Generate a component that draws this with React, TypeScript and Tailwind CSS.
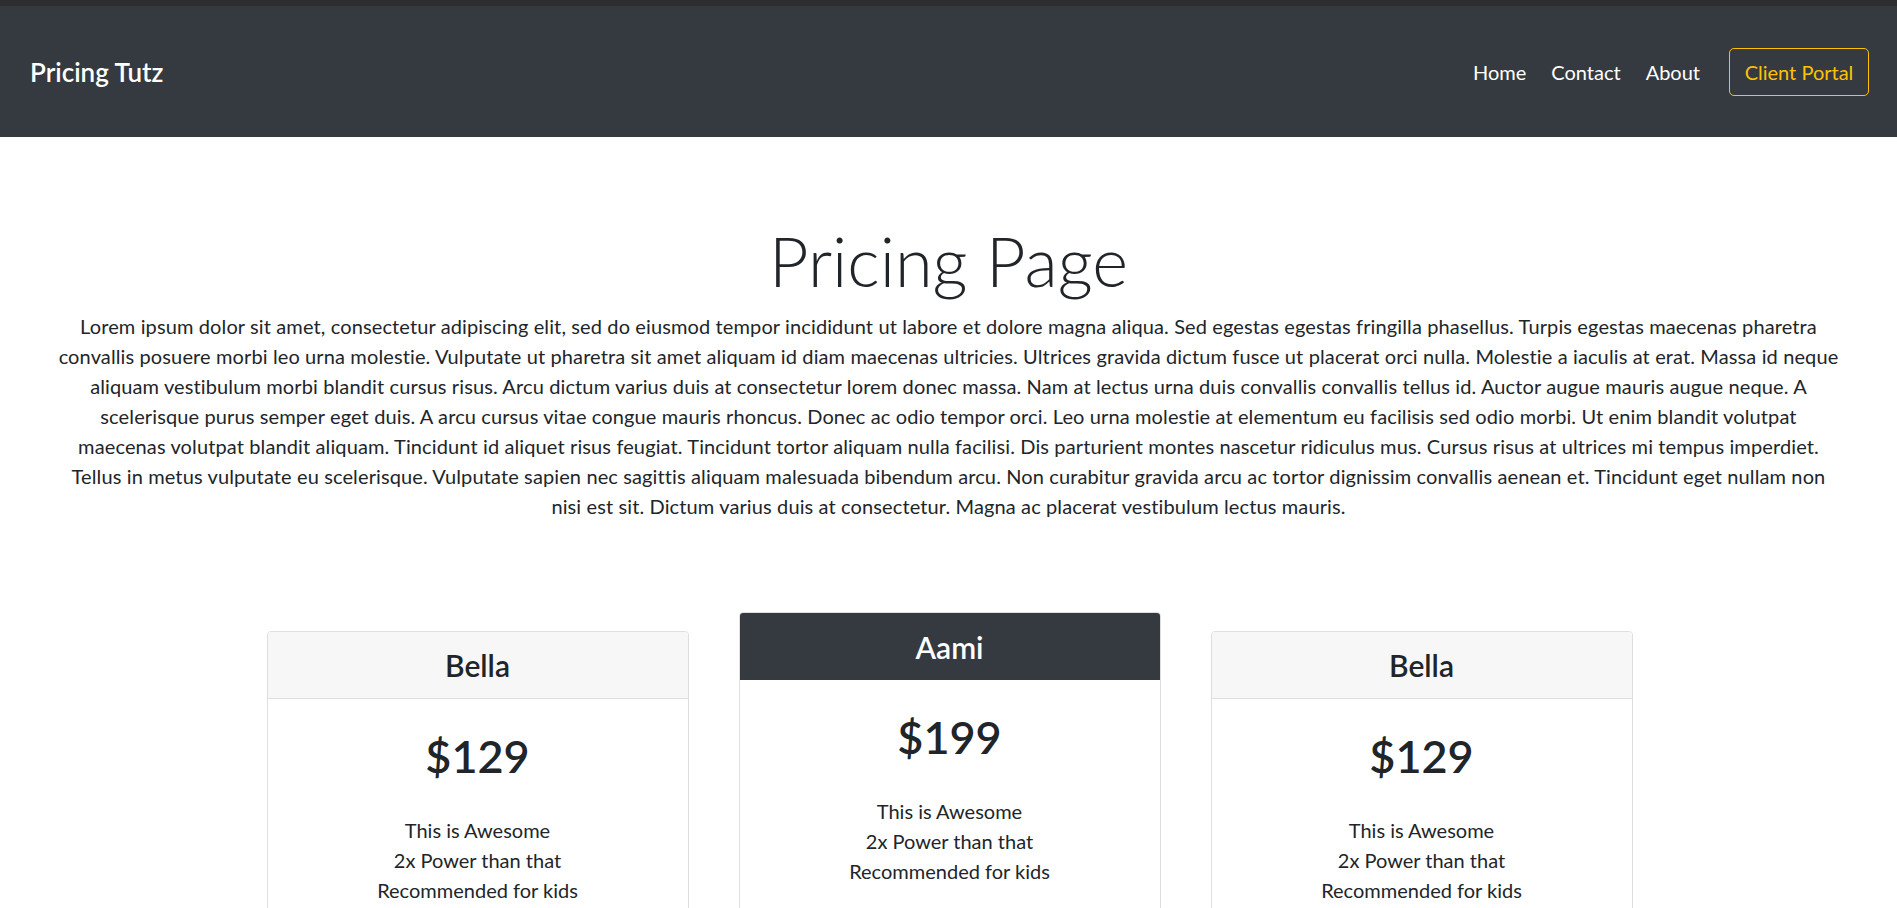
import React from "react";

const paragraphLines = [
  "Lorem ipsum dolor sit amet, consectetur adipiscing elit, sed do eiusmod tempor incididunt ut labore et dolore magna aliqua. Sed egestas egestas fringilla phasellus. Turpis egestas maecenas pharetra",
  "convallis posuere morbi leo urna molestie. Vulputate ut pharetra sit amet aliquam id diam maecenas ultricies. Ultrices gravida dictum fusce ut placerat orci nulla. Molestie a iaculis at erat. Massa id neque",
  "aliquam vestibulum morbi blandit cursus risus. Arcu dictum varius duis at consectetur lorem donec massa. Nam at lectus urna duis convallis convallis tellus id. Auctor augue mauris augue neque. A",
  "scelerisque purus semper eget duis. A arcu cursus vitae congue mauris rhoncus. Donec ac odio tempor orci. Leo urna molestie at elementum eu facilisis sed odio morbi. Ut enim blandit volutpat",
  "maecenas volutpat blandit aliquam. Tincidunt id aliquet risus feugiat. Tincidunt tortor aliquam nulla facilisi. Dis parturient montes nascetur ridiculus mus. Cursus risus at ultrices mi tempus imperdiet.",
  "Tellus in metus vulputate eu scelerisque. Vulputate sapien nec sagittis aliquam malesuada bibendum arcu. Non curabitur gravida arcu ac tortor dignissim convallis aenean et. Tincidunt eget nullam non",
  "nisi est sit. Dictum varius duis at consectetur. Magna ac placerat vestibulum lectus mauris.",
];

const features = ["This is Awesome", "2x Power than that", "Recommended for kids"];

type Plan = { name: string; price: string; featured?: boolean };

const plans: Plan[] = [
  { name: "Bella", price: "$129" },
  { name: "Aami", price: "$199", featured: true },
  { name: "Bella", price: "$129" },
];

function PricingCard({ plan }: { plan: Plan }) {
  return (
    <div
      className={
        "w-[422px] rounded-[4px] border border-[#dfdfdf] bg-white overflow-hidden " +
        (plan.featured ? "mt-0" : "mt-[19px]")
      }
    >
      <div
        className={
          plan.featured
            ? "flex h-[67px] items-center justify-center bg-[#343a40] text-white"
            : "flex h-[67px] items-center justify-center border-b border-[#dfdfdf] bg-[#f7f7f7] text-[#212529]"
        }
      >
        <h3 className="text-[30px] font-semibold leading-[36px]">{plan.name}</h3>
      </div>
      <div className="flex flex-col items-center px-5 pt-[30px] pb-[20px] text-center">
        <h1 className="h-[55px] text-[45px] font-semibold leading-[55px] text-[#212529]">{plan.price}</h1>
        <ul className="mt-[31px] text-[20px] leading-[30px] text-[#212529]">
          {features.map((f) => (
            <li key={f}>{f}</li>
          ))}
        </ul>
        <button className="mt-[30px] h-[48px] w-full rounded-[5px] border border-[#343a40] text-[20px] text-[#343a40]">
          Get started
        </button>
      </div>
    </div>
  );
}

export default function App() {
  return (
    <div className="h-[908px] w-full overflow-hidden bg-white font-['Lato',sans-serif] text-[#212529]">
      <div className="h-[6px] bg-[#2d2d2d]" />
      <nav className="flex h-[131px] items-center justify-between bg-[#343a40] pl-[30px] pr-[28px]">
        <a className="text-[26px] font-semibold leading-[36px] text-white">Pricing Tutz</a>
        <div className="flex items-center">
          <ul className="flex items-center gap-[25px] text-[20px] leading-[30px] text-white">
            <li>Home</li>
            <li>Contact</li>
            <li>About</li>
          </ul>
          <button className="ml-[29px] h-[48px] w-[140px] rounded-[5px] border border-[#ffc107] text-[20px] leading-[30px] text-[#ffc107]">
            Client Portal
          </button>
        </div>
      </nav>

      <main className="flex flex-col items-center pt-[83px]">
        <h1 className="text-[68.5px] font-light leading-[82px] text-[#212529]">Pricing Page</h1>
        <p className="mt-[9px] w-full px-[20px] text-center text-[20px] leading-[30px] tracking-[0.12px] text-[#212529]">
          {paragraphLines.map((l, i) => (
            <React.Fragment key={i}>
              {l}
              {i < paragraphLines.length - 1 && <br />}
            </React.Fragment>
          ))}
        </p>

        <div className="mt-[91px] flex items-start justify-center gap-[50px] pl-[2px]">
          {plans.map((p, i) => (
            <PricingCard key={i} plan={p} />
          ))}
        </div>
      </main>
    </div>
  );
}
